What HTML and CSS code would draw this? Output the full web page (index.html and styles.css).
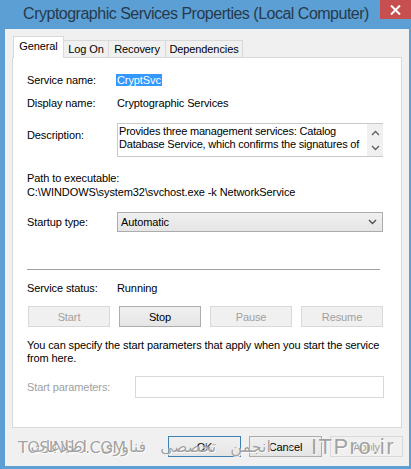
FILE: index.html
```html
<!DOCTYPE html>
<html lang="en">
<head>
    <meta charset="UTF-8">
    <title>Cryptographic Services Properties (Local Computer)</title>
    <link rel="stylesheet" href="styles.css">
</head>
<body>
    <div class="window">
        <div class="titlebar">
            <span class="title">Cryptographic Services Properties (Local Computer)</span>
            <span class="close">
                <svg width="11" height="10" viewBox="0 0 11 10"><path d="M1 0.5 L10 9.5 M10 0.5 L1 9.5" stroke="#fff" stroke-width="2"/></svg>
            </span>
        </div>
        <div class="client">
            <div class="tabs">
                <span class="tab active" style="width: 51px">General</span>
                <span class="tab" style="width: 46px">Log On</span>
                <span class="tab" style="width: 58px">Recovery</span>
                <span class="tab" style="width: 78px">Dependencies</span>
            </div>
            <div class="panel">
                <div class="row name-row">
                    <span class="label">Service name:</span>
                    <span class="value"><span class="selected-text">CryptSvc</span></span>
                </div>
                <div class="row display-row">
                    <span class="label">Display name:</span>
                    <span class="value">Cryptographic Services</span>
                </div>
                <div class="row desc-row">
                    <span class="label">Description:</span>
                    <div class="desc-box">
                        <div class="desc-text">Provides three management services: Catalog Database Service, which confirms the signatures of</div>
                        <div class="scroll">
                            <svg width="9" height="6" viewBox="0 0 9 6"><path d="M1 5 L4.5 1.5 L8 5" fill="none" stroke="#606060" stroke-width="1.4"/></svg>
                            <svg width="9" height="6" viewBox="0 0 9 6"><path d="M1 1 L4.5 4.5 L8 1" fill="none" stroke="#606060" stroke-width="1.4"/></svg>
                        </div>
                    </div>
                </div>
                <div class="path-block">
                    <div>Path to executable:</div>
                    <div>C:\WINDOWS\system32\svchost.exe -k NetworkService</div>
                </div>
                <div class="row startup-row">
                    <span class="label">Startup type:</span>
                    <div class="select">
                        <span>Automatic</span>
                        <svg width="9" height="6" viewBox="0 0 9 6"><path d="M1 1 L4.5 4.5 L8 1" fill="none" stroke="#505050" stroke-width="1.4"/></svg>
                    </div>
                </div>
                <div class="separator"></div>
                <div class="row status-row">
                    <span class="label">Service status:</span>
                    <span class="value">Running</span>
                </div>
                <div class="service-buttons">
                    <span class="btn disabled">Start</span>
                    <span class="btn">Stop</span>
                    <span class="btn disabled">Pause</span>
                    <span class="btn disabled">Resume</span>
                </div>
                <p class="hint">You can specify the start parameters that apply when you start the service from here.</p>
                <div class="row params-row">
                    <span class="label muted">Start parameters:</span>
                    <div class="param-input"></div>
                </div>
            </div>
            <div class="actions">
                <span class="btn default">OK</span>
                <span class="btn">Cancel</span>
                <span class="btn disabled">Apply</span>
            </div>
        </div>
        <div class="watermark">
            <span class="wm-site">TOSINSO.COM</span>
            <span class="wm-fa" dir="rtl"><span class="wm-it" dir="ltr">ITPro.ir</span> - انجمن تخصصی فناوری اطلاعات</span>
        </div>
    </div>
</body>
</html>
```

FILE: styles.css
```css
body {
    margin: 0;
    font-family: "Liberation Sans", Arial, sans-serif;
    font-size: 11px;
    letter-spacing: -0.1px;
    color: #000;
    background: #5c9fd4;
}
.window {
    width: 411px;
    height: 469px;
    background: #5c9fd4;
    position: relative;
    overflow: hidden;
}
.titlebar {
    height: 29px;
    display: flex;
    justify-content: center;
    align-items: center;
    position: relative;
}
.title {
    font-size: 16px;
    letter-spacing: -0.5px;
    color: #263a4c;
    margin-top: -2px;
    margin-left: -19px;
}
.close {
    position: absolute;
    top: 0;
    right: 0;
    width: 31px;
    height: 19px;
    background: #c74f50;
    display: flex;
    justify-content: center;
    align-items: center;
}
.client {
    margin: 0 2px 0 5px;
    height: 437px;
    background: #f0f0f0;
    padding-top: 7px;
    box-sizing: border-box;
}
.tabs {
    display: flex;
    align-items: flex-end;
    margin-left: 8px;
    height: 21px;
}
.tab {
    height: 17px;
    box-sizing: border-box;
    border: 1px solid #d9d9d9;
    border-bottom: none;
    margin-left: -1px;
    background: #f0f0f0;
    text-align: center;
    line-height: 16px;
}
.tab.active {
    height: 22px;
    margin-bottom: -1px;
    margin-left: 0;
    background: #fff;
    position: relative;
    z-index: 1;
    line-height: 19px;
}
.panel {
    margin: 0 7px;
    height: 371px;
    box-sizing: border-box;
    background: #fff;
    border: 1px solid #d9d9d9;
    padding: 15px 18px 0 14px;
}
.row {
    display: flex;
    align-items: center;
    line-height: 15px;
}
.label {
    width: 90px;
    flex: none;
}
.muted {
    color: #a0a0a0;
}
.selected-text {
    background: #3399ff;
    color: #fff;
    padding: 0 1px;
    margin-left: -1px;
}
.display-row {
    margin-top: 8px;
}
.desc-row {
    margin-top: 12px;
    align-items: flex-start;
}
.desc-row .label {
    padding-top: 5px;
}
.desc-box {
    flex: 1;
    height: 34px;
    box-sizing: border-box;
    border: 1px solid #c8c8c8;
    border-right: none;
    display: flex;
}
.desc-text {
    flex: 1;
    padding: 1px 0 0 1px;
    line-height: 13px;
    letter-spacing: -0.2px;
    overflow: hidden;
}
.scroll {
    width: 16px;
    background: #f0f0f0;
    display: flex;
    flex-direction: column;
    justify-content: space-between;
    align-items: center;
    padding: 6px 0 5px;
}
.path-block {
    margin-top: 14px;
    line-height: 14px;
}
.startup-row {
    margin-top: 13px;
}
.select {
    flex: 1;
    height: 20px;
    box-sizing: border-box;
    border: 1px solid #acacac;
    background: linear-gradient(#f0f0f0, #e5e5e5);
    display: flex;
    align-items: center;
    justify-content: space-between;
    padding: 0 5px 0 3px;
}
.separator {
    margin: 37px 3px 0 0;
    height: 1px;
    background: #a0a0a0;
}
.status-row {
    margin-top: 11px;
    line-height: 14px;
}
.service-buttons {
    display: flex;
    justify-content: space-between;
    margin-top: 11px;
    padding-left: 1px;
}
.btn {
    width: 82px;
    height: 21px;
    box-sizing: border-box;
    border: 1px solid #adadad;
    background: linear-gradient(#f0f0f0, #e5e5e5);
    display: flex;
    justify-content: center;
    align-items: center;
}
.btn.disabled {
    border-color: #d9d9d9;
    background: #f0f0f0;
    color: #a0a0a0;
}
.btn.default {
    border-color: #3c7fb1;
}
.hint {
    margin: 12px 0 0;
    line-height: 13px;
}
.params-row {
    margin-top: 11px;
}
.params-row .label {
    width: 108px;
}
.param-input {
    flex: 1;
    height: 22px;
    box-sizing: border-box;
    border: 1px solid #d9d9d9;
    margin-right: -1px;
}
.actions {
    display: flex;
    justify-content: flex-end;
    gap: 8px;
    margin-top: 8px;
    padding-right: 6px;
}
.actions .btn {
    width: 73px;
}
.watermark {
    position: absolute;
    left: 18px;
    right: 16px;
    top: 434px;
    height: 24px;
    pointer-events: none;
    font-family: "DejaVu Sans", sans-serif;
    color: rgba(120, 120, 120, 0.7);
    text-shadow: 0 0 1px #fff, 1px 1px 0 rgba(255, 255, 255, 0.8);
}
.wm-site {
    position: absolute;
    left: 0;
    top: 4px;
    font-size: 16px;
    letter-spacing: -0.6px;
}
.wm-fa {
    position: absolute;
    right: 0;
    top: 0;
    font-size: 16px;
    letter-spacing: 2px;
    word-spacing: 9px;
    white-space: nowrap;
}
.wm-it {
    font-family: "Liberation Sans", sans-serif;
    font-size: 22px;
    letter-spacing: 1.5px;
    word-spacing: 0;
    vertical-align: -2px;
}
```
